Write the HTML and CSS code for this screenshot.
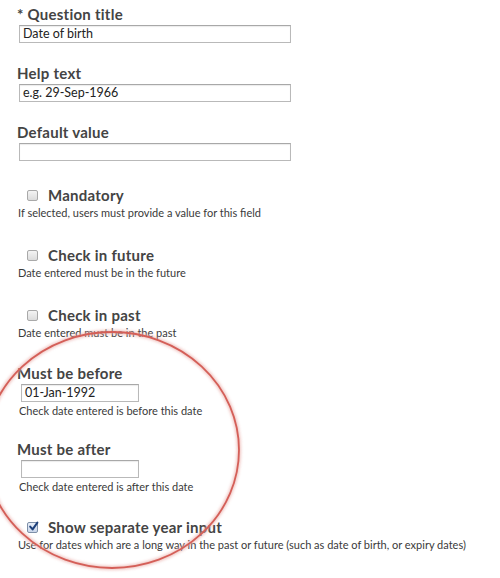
FILE: index.html
```html
<!DOCTYPE html>
<html>
<head>
<meta charset="utf-8">
<link rel="stylesheet" href="styles.css">
</head>
<body>
<div class="page">
  <div class="form">
    <div class="text-field">
      <div class="label">* Question title</div>
      <div class="input wide">Date of birth</div>
    </div>
    <div class="text-field">
      <div class="label">Help text</div>
      <div class="input wide">e.g. 29-Sep-1966</div>
    </div>
    <div class="text-field">
      <div class="label">Default value</div>
      <div class="input wide"></div>
    </div>

    <div class="check-field first">
      <div class="check-row"><span class="box"></span><span class="label">Mandatory</span></div>
      <div class="help">If selected, users must provide a value for this field</div>
    </div>
    <div class="check-field">
      <div class="check-row"><span class="box"></span><span class="label">Check in future</span></div>
      <div class="help">Date entered must be in the future</div>
    </div>
    <div class="check-field">
      <div class="check-row"><span class="box"></span><span class="label">Check in past</span></div>
      <div class="help">Date entered must be in the past</div>
    </div>

    <div class="date-field first">
      <div class="label">Must be before</div>
      <div class="input short">01-Jan-1992</div>
      <div class="help indent">Check date entered is before this date</div>
    </div>
    <div class="date-field">
      <div class="label">Must be after</div>
      <div class="input short"></div>
      <div class="help indent">Check date entered is after this date</div>
    </div>

    <div class="check-field last">
      <div class="check-row"><span class="box checked"><svg viewBox="0 0 11 11" width="11" height="11"><path d="M2.2 5.6 L4.6 8.4 L9.4 1.6" fill="none" stroke="#1d3f7a" stroke-width="2" stroke-linecap="round" stroke-linejoin="round"/></svg></span><span class="label">Show separate year input</span></div>
      <div class="help">Use for dates which are a long way in the past or future (such as date of birth, or expiry dates)</div>
    </div>
  </div>

  <svg class="annotation" width="500" height="578" viewBox="0 0 500 578">
    <defs>
      <filter id="soft" x="-10%" y="-10%" width="120%" height="120%">
        <feGaussianBlur stdDeviation="1.6"/>
      </filter>
    </defs>
    <ellipse cx="112" cy="450" rx="127" ry="118" fill="none" stroke="#e9a9a4" stroke-width="4" filter="url(#soft)" opacity="0.7"/>
    <ellipse cx="112" cy="450" rx="127" ry="118" fill="none" stroke="#d45f58" stroke-width="1.8"/>
  </svg>
</div>
</body>
</html>
```
FILE: styles.css
```css
html, body {
  margin: 0;
  padding: 0;
  background: #ffffff;
}
.page {
  position: relative;
  width: 500px;
  height: 578px;
  overflow: hidden;
  font-family: "Lato", "Liberation Sans", sans-serif;
}
.form {
  padding: 5px 0 0 17px;
}
.label {
  font-size: 15px;
  line-height: 18px;
  font-weight: 700;
  letter-spacing: 0.25px;
  color: #444444;
  white-space: nowrap;
}
.input {
  box-sizing: border-box;
  height: 18px;
  border: 1px solid #b9b9b9;
  border-top-color: #a8a8a8;
  box-shadow: inset 0 1px 1px rgba(0,0,0,0.08);
  font-size: 12.5px;
  line-height: 16px;
  padding: 0 3px;
  color: #222;
  margin-top: 2px;
  background: #fff;
}
.input.wide {
  width: 272px;
  margin-left: 2px;
}
.input.short {
  width: 118px;
  margin-left: 4px;
}
.text-field {
  height: 59px;
}
.check-field {
  height: 60px;
}
.check-field.first {
  margin-top: 4px;
}
.check-row {
  display: flex;
  align-items: center;
  gap: 10px;
  padding-left: 10px;
  height: 18px;
}
.box {
  box-sizing: border-box;
  width: 11px;
  height: 11px;
  border: 1px solid #a9a9a9;
  border-radius: 2px;
  background: linear-gradient(#f4f4f4, #dcdcdc);
  display: block;
  position: relative;
}
.box.checked {
  background: linear-gradient(#e8eef8, #c9d6ea);
  border-color: #7e8fa8;
}
.box.checked svg {
  position: absolute;
  left: 0;
  top: -2px;
}
.help {
  font-size: 11px;
  line-height: 14px;
  color: #3a3a3a;
  white-space: nowrap;
  margin-top: 2px;
  margin-left: 1px;
}
.help.indent {
  margin-left: 2px;
}
.date-field {
  height: 76px;
}
.date-field.first {
  margin-top: -2px;
}
.check-field.last {
  margin-top: 2px;
}
.annotation {
  position: absolute;
  left: 0;
  top: 0;
  pointer-events: none;
}
```
